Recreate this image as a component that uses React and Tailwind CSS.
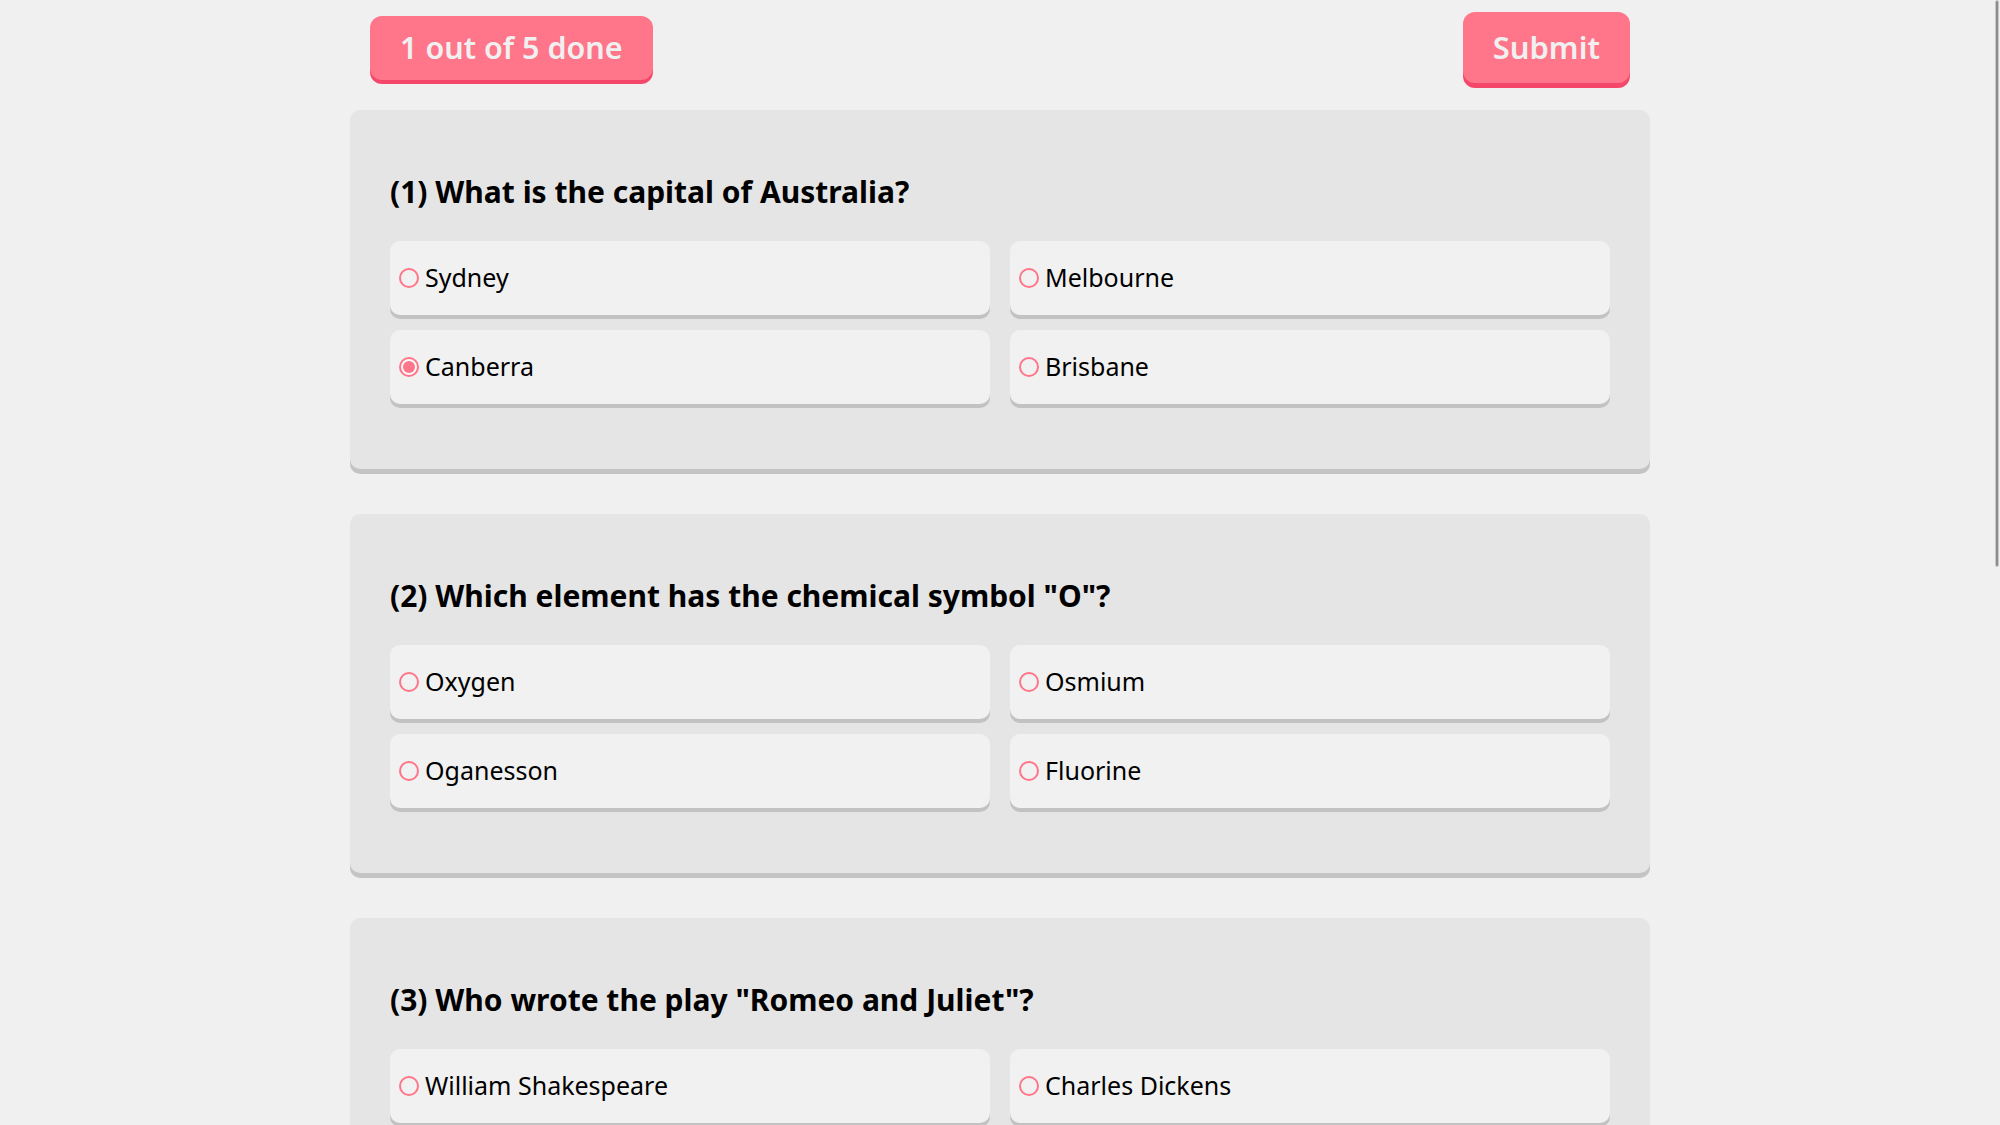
import React from 'react';

const questions = [
  {
    id: 1,
    text: 'What is the capital of Australia?',
    options: ['Sydney', 'Melbourne', 'Canberra', 'Brisbane'],
    selected: 'Canberra',
  },
  {
    id: 2,
    text: 'Which element has the chemical symbol "O"?',
    options: ['Oxygen', 'Osmium', 'Oganesson', 'Fluorine'],
    selected: null,
  },
  {
    id: 3,
    text: 'Who wrote the play "Romeo and Juliet"?',
    options: ['William Shakespeare', 'Charles Dickens', 'Jane Austen', 'Mark Twain'],
    selected: null,
  },
  {
    id: 4,
    text: 'What is the largest planet in our solar system?',
    options: ['Earth', 'Jupiter', 'Saturn', 'Neptune'],
    selected: null,
  },
  {
    id: 5,
    text: 'How many continents are there on Earth?',
    options: ['Five', 'Six', 'Seven', 'Eight'],
    selected: null,
  },
];

const Radio = ({ checked }) => (
  <svg width="20" height="20" viewBox="0 0 20 20" className="shrink-0">
    <circle cx="10" cy="10" r="9" fill={checked ? '#fafafa' : 'none'} stroke="#ff7589" strokeWidth="2" />
    {checked && <circle cx="10" cy="10" r="6" fill="#ff7589" />}
  </svg>
);

const QuestionCard = ({ question }) => (
  <div className="rounded-[10px] bg-[#e5e5e5] shadow-[0_5px_0_#c4c4c4] px-10 pt-[61px] pb-[65px]">
    <h2 className="text-[30px] leading-[41px] font-bold text-black">
      ({question.id}) {question.text}
    </h2>
    <div className="grid grid-cols-2 gap-x-5 gap-y-[15px] mt-[29px]">
      {question.options.map((option) => (
        <label
          key={option}
          className="h-[74px] rounded-[10px] bg-[#f1f1f1] shadow-[0_4px_0_#c2c2c2] flex items-center pl-[9px] gap-[6px] text-[25px] text-black cursor-pointer"
        >
          <Radio checked={question.selected === option} />
          <span>{option}</span>
        </label>
      ))}
    </div>
  </div>
);

export default function App() {
  const done = questions.filter((q) => q.selected).length;

  return (
    <div className="min-h-screen bg-[#f0f0f0]" style={{ fontFamily: '"Noto Sans", "Open Sans", sans-serif' }}>
      <div className="w-[1300px] mx-auto pb-[100px]">
        <div className="flex justify-between items-center px-5 pt-3">
          <div className="h-[64px] px-[30px] flex items-center rounded-[12px] bg-[#ff7589] shadow-[0_4px_0_#f5476a] text-[30.5px] font-semibold text-[#f0f0f0]">
            {done} out of {questions.length} done
          </div>
          <button className="h-[71px] px-[30px] flex items-center rounded-[12px] bg-[#ff7589] shadow-[0_5px_0_#f5476a] text-[31px] font-semibold text-[#f0f0f0]">
            Submit
          </button>
        </div>
        <div className="flex flex-col gap-[45px] mt-[27px]">
          {questions.map((q) => (
            <QuestionCard key={q.id} question={q} />
          ))}
        </div>
      </div>
      {/* overlay scrollbar thumb */}
      <div className="fixed top-0 right-[1px] w-[4px] h-[567px] rounded-full bg-[#8a8d8c] border border-[#c8c8c8]" />
    </div>
  );
}
